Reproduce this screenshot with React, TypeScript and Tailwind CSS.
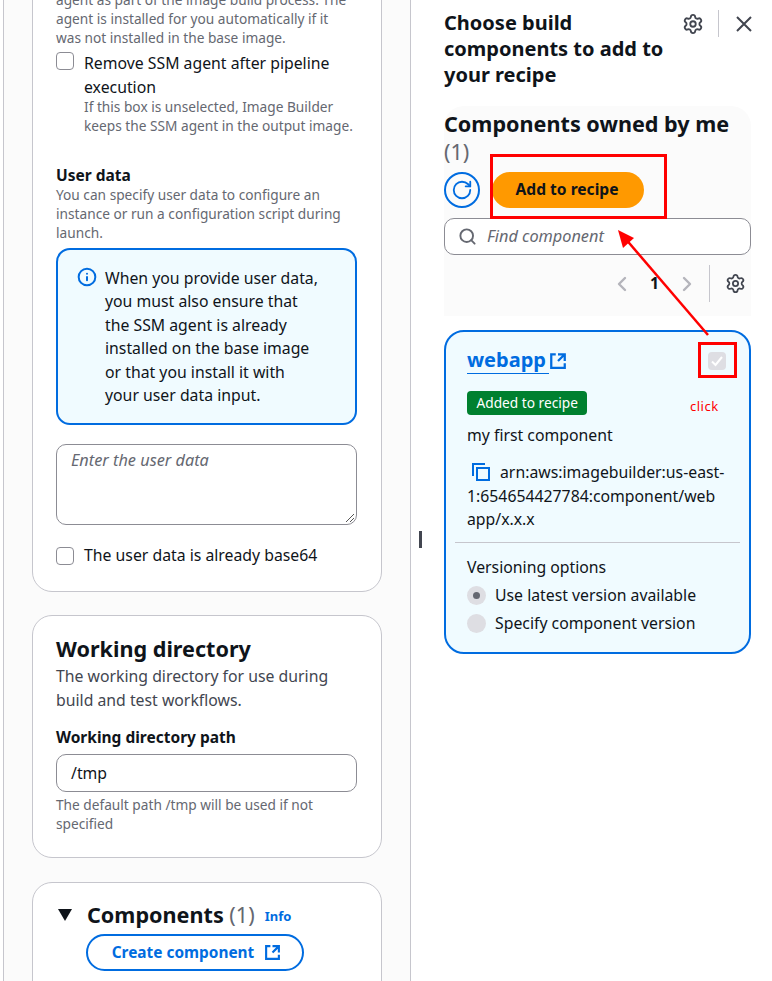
import { Search, Settings, ChevronLeft, ChevronRight, RotateCw, Info } from "lucide-react";

function Checkbox() {
  return <span className="mt-[1px] h-[18px] w-[18px] shrink-0 rounded-[4px] border border-[#8c8c94] bg-white" />;
}

function CopyIcon() {
  return (
    <svg width="18" height="18" viewBox="0 0 18 18" fill="none" stroke="#006ce0" strokeWidth="2" className="shrink-0">
      <path d="M1 13V1h12" />
      <rect x="5" y="5" width="12" height="12" />
    </svg>
  );
}

function ExternalIcon({ size }: { size: number }) {
  return (
    <svg width={size} height={size} viewBox="0 0 16 16" fill="none" stroke="#006ce0" strokeWidth="2" className="shrink-0">
      <path d="M14 8V2H8M14 2 8 8M6 2H2v12h12v-4" />
    </svg>
  );
}

function LeftPanel() {
  return (
    <div className="h-[981px] w-[408px] ml-[3px] shrink-0 overflow-hidden border-x border-[#c6c6cd] bg-[#fbfbfb] px-[28px]">
      <div className="-mt-[22px] rounded-b-[20px] border border-[#c6c6cd] bg-white pb-[26px] pl-[23px] pr-[24px] pt-[11px]">
        <p className="pr-[4px] text-[13.7px] leading-[19px] text-[#656871]">
          agent as part of the image build process. The agent is installed for you automatically if it was not installed in the base image.
        </p>
        <div className="mt-[4px] flex gap-[10px]">
          <Checkbox />
          <div>
            <p className="text-[15.8px] leading-[24px] text-[#0f141a]">Remove SSM agent after pipeline execution</p>
            <p className="-mt-[2px] text-[13.7px] leading-[19px] text-[#656871]">
              If this box is unselected, Image Builder keeps the SSM agent in the output image.
            </p>
          </div>
        </div>
        <p className="mt-[30px] text-[15.5px] font-bold leading-[20px] text-[#0f141a]">User data</p>
        <p className="text-[13.7px] leading-[19px] text-[#656871]">
          You can specify user data to configure an instance or run a configuration script during launch.
        </p>
        <div className="mt-[6px] flex gap-[8px] rounded-[14px] border-2 border-[#006ce0] bg-[#f0fbff] px-[19px] pb-[10px] pt-[11px]">
          <Info size={20} color="#006ce0" strokeWidth={2.4} className="mt-[6px] shrink-0" />
          <p className="w-[214px] py-[6px] text-[15.8px] leading-[23.4px] text-[#0f141a]">
            When you provide user data, you must also ensure that the SSM agent is already installed on the base image or that you install it with your user data input.
          </p>
        </div>
        <div className="relative mt-[19px] h-[81px] rounded-[10px] border border-[#8c8c94] bg-white px-[14px] py-[4px] text-[16.3px] italic leading-[22px] text-[#656871]">
          Enter the user data
          <svg width="10" height="10" viewBox="0 0 10 10" className="absolute bottom-[1px] right-[1px]" stroke="#555" strokeWidth="1" fill="none">
            <path d="M1 9 9 1M5 9 9 5" />
          </svg>
        </div>
        <div className="mt-[20px] flex items-center gap-[10px]">
          <Checkbox />
          <span className="text-[15.8px] leading-[20px] text-[#0f141a]">The user data is already base64</span>
        </div>
      </div>

      <div className="mt-[23px] rounded-[20px] border border-[#c6c6cd] bg-white pb-[24px] pl-[23px] pr-[24px] pt-[18px]">
        <h2 className="text-[21.6px] font-bold leading-[30px] text-[#0f141a]">Working directory</h2>
        <p className="text-[15.8px] leading-[24px] text-[#424650]">
          The working directory for use during build and test workflows.
        </p>
        <p className="mt-[15px] text-[15.5px] font-bold leading-[20px] text-[#0f141a]">Working directory path</p>
        <div className="mt-[7px] h-[38px] rounded-[10px] border border-[#8c8c94] bg-white px-[14px] text-[15.8px] leading-[36px] text-[#0f141a]">
          /tmp
        </div>
        <p className="mt-[3px] text-[13.7px] leading-[19px] text-[#656871]">The default path /tmp will be used if not specified</p>
      </div>

      <div className="mt-[24px] rounded-t-[20px] border border-[#c6c6cd] bg-white px-[25px] pb-[60px] pt-[17px]">
        <div className="flex items-center">
          <span className="h-0 w-0 border-x-[7.5px] border-t-[12px] border-x-transparent border-t-[#0f141a]" />
          <h2 className="ml-[15px] text-[21.6px] font-bold leading-[30px] text-[#0f141a]">
            Components <span className="font-normal text-[#656871]">(1)</span>
          </h2>
          <span className="ml-[10px] mt-[3px] text-[13px] font-bold text-[#006ce0]">Info</span>
        </div>
        <div className="ml-[28px] mt-[4px] flex h-[37px] w-[218px] items-center justify-center gap-[10px] rounded-full border-2 border-[#006ce0] pl-[3px] text-[15.4px] font-bold text-[#006ce0]">
          Create component
          <ExternalIcon size={17} />
        </div>
      </div>
    </div>
  );
}

function RightPanel() {
  return (
    <div className="relative h-[981px] flex-1 overflow-hidden pl-[33px] pr-[21px] pt-[10px]">
      <div className="flex items-start justify-between">
        <h1 className="w-[232px] text-[20px] font-bold leading-[26px] text-[#0f141a]">
          Choose build components to add to your recipe
        </h1>
        <div className="flex items-center">
          <Settings size={22} color="#424650" strokeWidth={2} />
          <span className="ml-[14px] h-[27px] w-px bg-[#c6c6cd]" />
          <svg width="16" height="16" viewBox="0 0 16 16" fill="none" stroke="#424650" strokeWidth="2" className="ml-[17px] mr-[-1px]">
            <path d="M1 1 15 15M15 1 1 15" />
          </svg>
        </div>
      </div>

      <div className="mt-[18px] h-[210px] rounded-t-[20px] bg-[#fbfbfb]">
        <h2 className="pt-[3px] text-[21.6px] font-bold leading-[30px] text-[#0f141a]">Components owned by me</h2>
        <p className="text-[21.6px] leading-[25px] text-[#656871]">(1)</p>
        <div className="mt-[8px] flex items-center gap-[12px]">
          <span className="flex h-[36px] w-[36px] items-center justify-center rounded-full border-2 border-[#006ce0]">
            <RotateCw size={22} color="#006ce0" strokeWidth={2} />
          </span>
          <span className="flex h-[36px] w-[152px] items-center justify-center rounded-full bg-[#ff9900] pr-[2px] text-[15.6px] font-bold text-[#0f141a]">
            Add to recipe
          </span>
        </div>
        <div className="mt-[10px] flex h-[37px] items-center rounded-[10px] border border-[#8c8c94] bg-white pl-[13px]">
          <Search size={19} color="#656871" strokeWidth={2.4} />
          <span className="ml-[10px] text-[16.3px] italic text-[#656871]">Find component</span>
        </div>
        <div className="mt-[10px] flex h-[37px] items-center justify-end">
          <ChevronLeft size={24} color="#b4b4bb" strokeWidth={2.4} />
          <span className="mx-[16px] text-[15.8px] font-bold text-[#0f141a]">1</span>
          <ChevronRight size={24} color="#b4b4bb" strokeWidth={2.4} />
          <span className="ml-[10px] mr-[15px] h-[37px] w-px bg-[#c6c6cd]" />
          <Settings size={21} color="#424650" strokeWidth={2} className="mr-[5px]" />
        </div>
      </div>

      <div className="mt-[14px] rounded-[20px] border-2 border-[#006ce0] bg-[#f0fbff] pb-[18px] pt-[15px]">
        <div className="flex items-center justify-between pl-[21px] pr-[23px]">
          <span className="flex items-center">
            <span className="border-b border-[#006ce0] pr-[3px] text-[20px] font-bold leading-[26px] text-[#006ce0]">webapp</span>
            <ExternalIcon size={18} />
          </span>
          <span className="flex h-[18px] w-[18px] items-center justify-center rounded-[4px] bg-[#dedee3] text-white">
            <svg width="14" height="14" viewBox="0 0 14 14" fill="none" stroke="#fff" strokeWidth="2">
              <path d="M2 7.5 5.5 11 12 3" />
            </svg>
          </span>
        </div>
        <span className="ml-[21px] mt-[17px] inline-block rounded-[4px] bg-[#00802f] px-[9.5px] text-[13.7px] leading-[24px] text-white">
          Added to recipe
        </span>
        <p className="ml-[21px] mt-[9px] text-[15.8px] leading-[22px] text-[#0f141a]">my first component</p>
        <div className="mt-[15px] whitespace-nowrap pl-[21px] text-[15.8px] leading-[23.7px] text-[#0f141a]">
          <span className="ml-[5px] mr-[10px] inline-block align-[-3px]">
            <CopyIcon />
          </span>
          arn:aws:imagebuilder:us-east-
          <br />
          1:654654427784:component/web
          <br />
          app/x.x.x
        </div>
        <div className="mx-[9px] mt-[10px] h-px bg-[#c6c6cd]" />
        <p className="ml-[21px] mt-[13px] text-[15.8px] leading-[22px] text-[#0f141a]">Versioning options</p>
        <div className="ml-[21px] mt-[6px] flex items-center gap-[9px] text-[15.8px] leading-[22px] text-[#0f141a]">
          <span className="flex h-[19px] w-[19px] items-center justify-center rounded-full bg-[#dedee3]">
            <span className="h-[7px] w-[7px] rounded-full bg-[#656871]" />
          </span>
          Use latest version available
        </div>
        <div className="ml-[21px] mt-[6px] flex items-center gap-[9px] text-[15.8px] leading-[22px] text-[#0f141a]">
          <span className="h-[19px] w-[19px] rounded-full bg-[#dedee3]" />
          Specify component version
        </div>
      </div>
    </div>
  );
}

function Annotations() {
  return (
    <>
      <div className="absolute left-[490px] top-[154px] h-[65px] w-[177px] border-[3px] border-[#ff0000]" />
      <div className="absolute left-[698px] top-[342px] h-[36px] w-[39px] border-[3px] border-[#ff0000]" />
      <span className="absolute left-[690px] top-[397px] text-[13px] leading-[18px] tracking-[0.5px] text-[#ff0000]">click</span>
      <svg className="absolute left-[610px] top-[225px]" width="105" height="115" viewBox="0 0 105 115" fill="none">
        <path d="M98 110 14 12" stroke="#ff0000" strokeWidth="2.5" />
        <path d="M8 5 24 13 13 23Z" fill="#ff0000" />
      </svg>
    </>
  );
}

export default function App() {
  return (
    <div className="relative flex h-[981px] w-[772px] overflow-hidden bg-white font-['Noto_Sans',sans-serif]">
      <LeftPanel />
      <RightPanel />
      <span className="absolute left-[419px] top-[531px] h-[17px] w-[3px] bg-[#424650]" />
      <Annotations />
    </div>
  );
}
